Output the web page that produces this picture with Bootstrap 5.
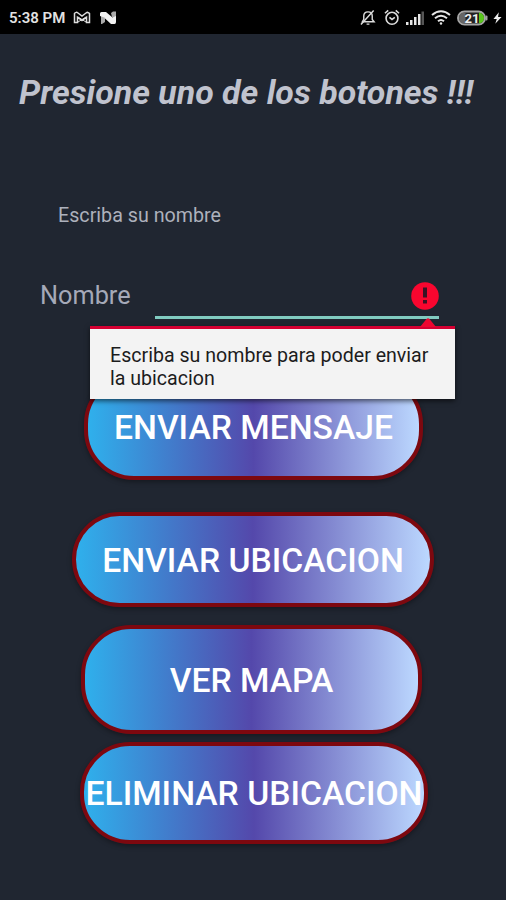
<!DOCTYPE html>
<html lang="es">
<head>
<meta charset="utf-8">
<meta name="viewport" content="width=device-width, initial-scale=1">
<title>Presione uno de los botones</title>
<link href="https://cdn.jsdelivr.net/npm/bootstrap@5.3.0/dist/css/bootstrap.min.css" rel="stylesheet">
<style>
body{background:#202631;color:#b9bdc9;font-family:Roboto,"Liberation Sans",sans-serif;height:900px;overflow:hidden}
.status{height:34px;background:#000;color:#e2e2e2;font-size:15px;font-weight:600;padding:1px 4px 0 9px}
.status svg{display:block;flex:none}
.clock{width:56px;white-space:nowrap;line-height:1;padding-top:1px}
.headline{font-size:33.9px;font-weight:700;font-style:italic;line-height:40px;margin:39px 0 0 19px;white-space:nowrap;color:#c0c3ce}
.hint{font-size:19.7px;line-height:24px;margin:91px 0 0 58px;color:#adb1bc}
.field-row{height:46px;margin:52px 67px 0 40px}
.field-label{width:115px;font-size:25.3px;line-height:30px;padding-top:1px;color:#a5a9b8}
.field-box{border-bottom:3px solid #80cbc0;height:39px;padding-top:2px}
.tip{left:90px;top:326px;width:365px;height:73px;background:#f3f3f3;border-top:3px solid #d50032;color:#1c1c1c;font-size:19.6px;line-height:23px;padding:15px 20px 0;box-shadow:0 2px 5px rgba(0,0,0,.6);white-space:nowrap}
.tip svg{right:19px;top:-11px}
.pill{border:4px solid #7d080f;border-radius:50px;background:linear-gradient(90deg,#2fb0ec 0%,#5448ab 50%,#bcd8ff 100%);color:#fff;font-size:33.65px;font-weight:500;line-height:40px;padding:3px 0 0;white-space:nowrap;box-shadow:0 2px 5px rgba(0,0,0,.35);display:flex;align-items:center;justify-content:center}
.pill:hover{color:#fff}
.p-mensaje{width:339px;height:106px;margin:48px 0 0 84px}
.p-ubicacion{width:362px;height:95px;margin:32px 0 0 72px}
.p-mapa{width:341px;height:109px;margin:18px 0 0 81px}
.p-eliminar{width:348px;height:102px;margin:8px 0 0 80px}
.p-mensaje,.p-eliminar{padding-top:1px}
</style>
</head>
<body>
<header class="status d-flex align-items-center">
  <span class="clock">5:38 PM</span>
  <svg class="ms-2 me-2" width="18" height="14" viewBox="0 0 18 14" fill="none" stroke="#ddd" stroke-width="1.5"><path d="M1.500 2.500v9h3V6.200L9 9.500l4.500-3.300v5.300h3v-9q-1.500-2-3.500-.5L9 5 5 2q-2-1.500-3.500.5z"/><path d="M5 11l8-5M13 11L5 6" stroke-width="1"/></svg>
  <svg width="18" height="14" viewBox="0 0 18 14"><path d="M2 13V4l4 3v4l-3 2zM12 2l2-1.500h3V8l-4-2z" fill="#aaa"/><path d="M1 5V2.500Q1 1 2.500 1H7l6.500 5.500L17 5v6q0 2-1.500 2H12L5 6.500z" fill="#f2f2f2"/></svg>
  <div class="d-flex align-items-center ms-auto">
    <svg width="16" height="17" viewBox="0 0 17 18" fill="none" stroke="#ddd" stroke-width="1.500"><path d="M2.500 13.500h12.500l-2-2.500V7.500q0-4.500-4.500-4.500T4 7.500V11z"/><path d="M7 16h3M1 16.500L14.500 1.500"/></svg>
    <svg class="ms-2" width="16" height="17" viewBox="0 0 17 17" fill="none" stroke="#ddd" stroke-width="1.700"><circle cx="8.500" cy="9.300" r="6.300"/><path d="M1 4l3.500-3M16 4l-3.500-3M5.800 8.300l2.700 2.200 3-2.200"/></svg>
    <svg class="ms-1" width="22" height="16" viewBox="0 0 22 16" fill="#e6e6e6"><path d="M2 12h2.500v3H2zM6 10h2.500v5H6zM10 7h2.500v8H10zM14 4h2.500v11H14z"/><path d="M17.500 1.500H20V15h-2.500z" fill="#555"/></svg>
    <svg class="ms-1" width="22" height="17" viewBox="0 0 22 17" fill="none" stroke="#e6e6e6" stroke-width="2"><path d="M2 6q9-7.500 18 0M5 9.300q6-5 12 0M8 12.300q3-2.500 6 0"/><circle cx="11" cy="14.500" r="1.200" fill="#e6e6e6" stroke="none"/></svg>
    <svg class="ms-1" width="33" height="16" viewBox="0 0 33 16"><rect x="2" y="1.500" width="27" height="13" rx="6.500" fill="#222" stroke="#a5a5a5" stroke-width="2"/><path d="M3 8q0-5.500 5.500-5.500h1v11h-1Q3 13.500 3 8z" fill="#666"/><path d="M23 2.500q5 1 5 5.500t-5 5.500z" fill="#5ac71c"/><rect x="29.500" y="5.500" width="2" height="5" rx="1" fill="#a5a5a5"/><text x="16" y="12.600" font-family="Roboto" font-size="13" font-weight="700" fill="#eee" text-anchor="middle">21</text></svg>
    <svg class="ms-1" width="9" height="14" viewBox="0 0 10 14"><path d="M6.500.5L.5 8h3.700L2.500 13.500 9.500 6H5.600z" fill="#eee"/></svg>
  </div>
</header>
<main>
  <h1 class="headline">Presione uno de los botones !!!</h1>
  <p class="hint mb-0">Escriba su nombre</p>
  <div class="field-row d-flex">
    <label class="field-label" for="nombre">Nombre</label>
    <div class="field-box flex-grow-1 d-flex justify-content-end" id="nombre">
      <svg width="28" height="28" viewBox="0 0 28 28"><circle cx="14" cy="14" r="13.800" fill="#f9062f"/><path d="M12 5.500h4v10h-4zM12 18h4v3.500h-4z" fill="#3a1325"/></svg>
    </div>
  </div>
  <button class="btn pill p-mensaje" type="button">ENVIAR MENSAJE</button>
  <button class="btn pill p-ubicacion" type="button">ENVIAR UBICACION</button>
  <button class="btn pill p-mapa" type="button">VER MAPA</button>
  <button class="btn pill p-eliminar" type="button">ELIMINAR UBICACION</button>
</main>
<div class="tip position-absolute" role="tooltip">
  <svg class="position-absolute" width="16" height="9" viewBox="0 0 16 9"><path d="M0 9L6.500 1q1.500-1.500 3 0L16 9z" fill="#ee0630"/></svg>
  Escriba su nombre para poder enviar<br>la ubicacion
</div>
<script src="https://cdn.jsdelivr.net/npm/bootstrap@5.3.0/dist/js/bootstrap.bundle.min.js"></script>
</body>
</html>
